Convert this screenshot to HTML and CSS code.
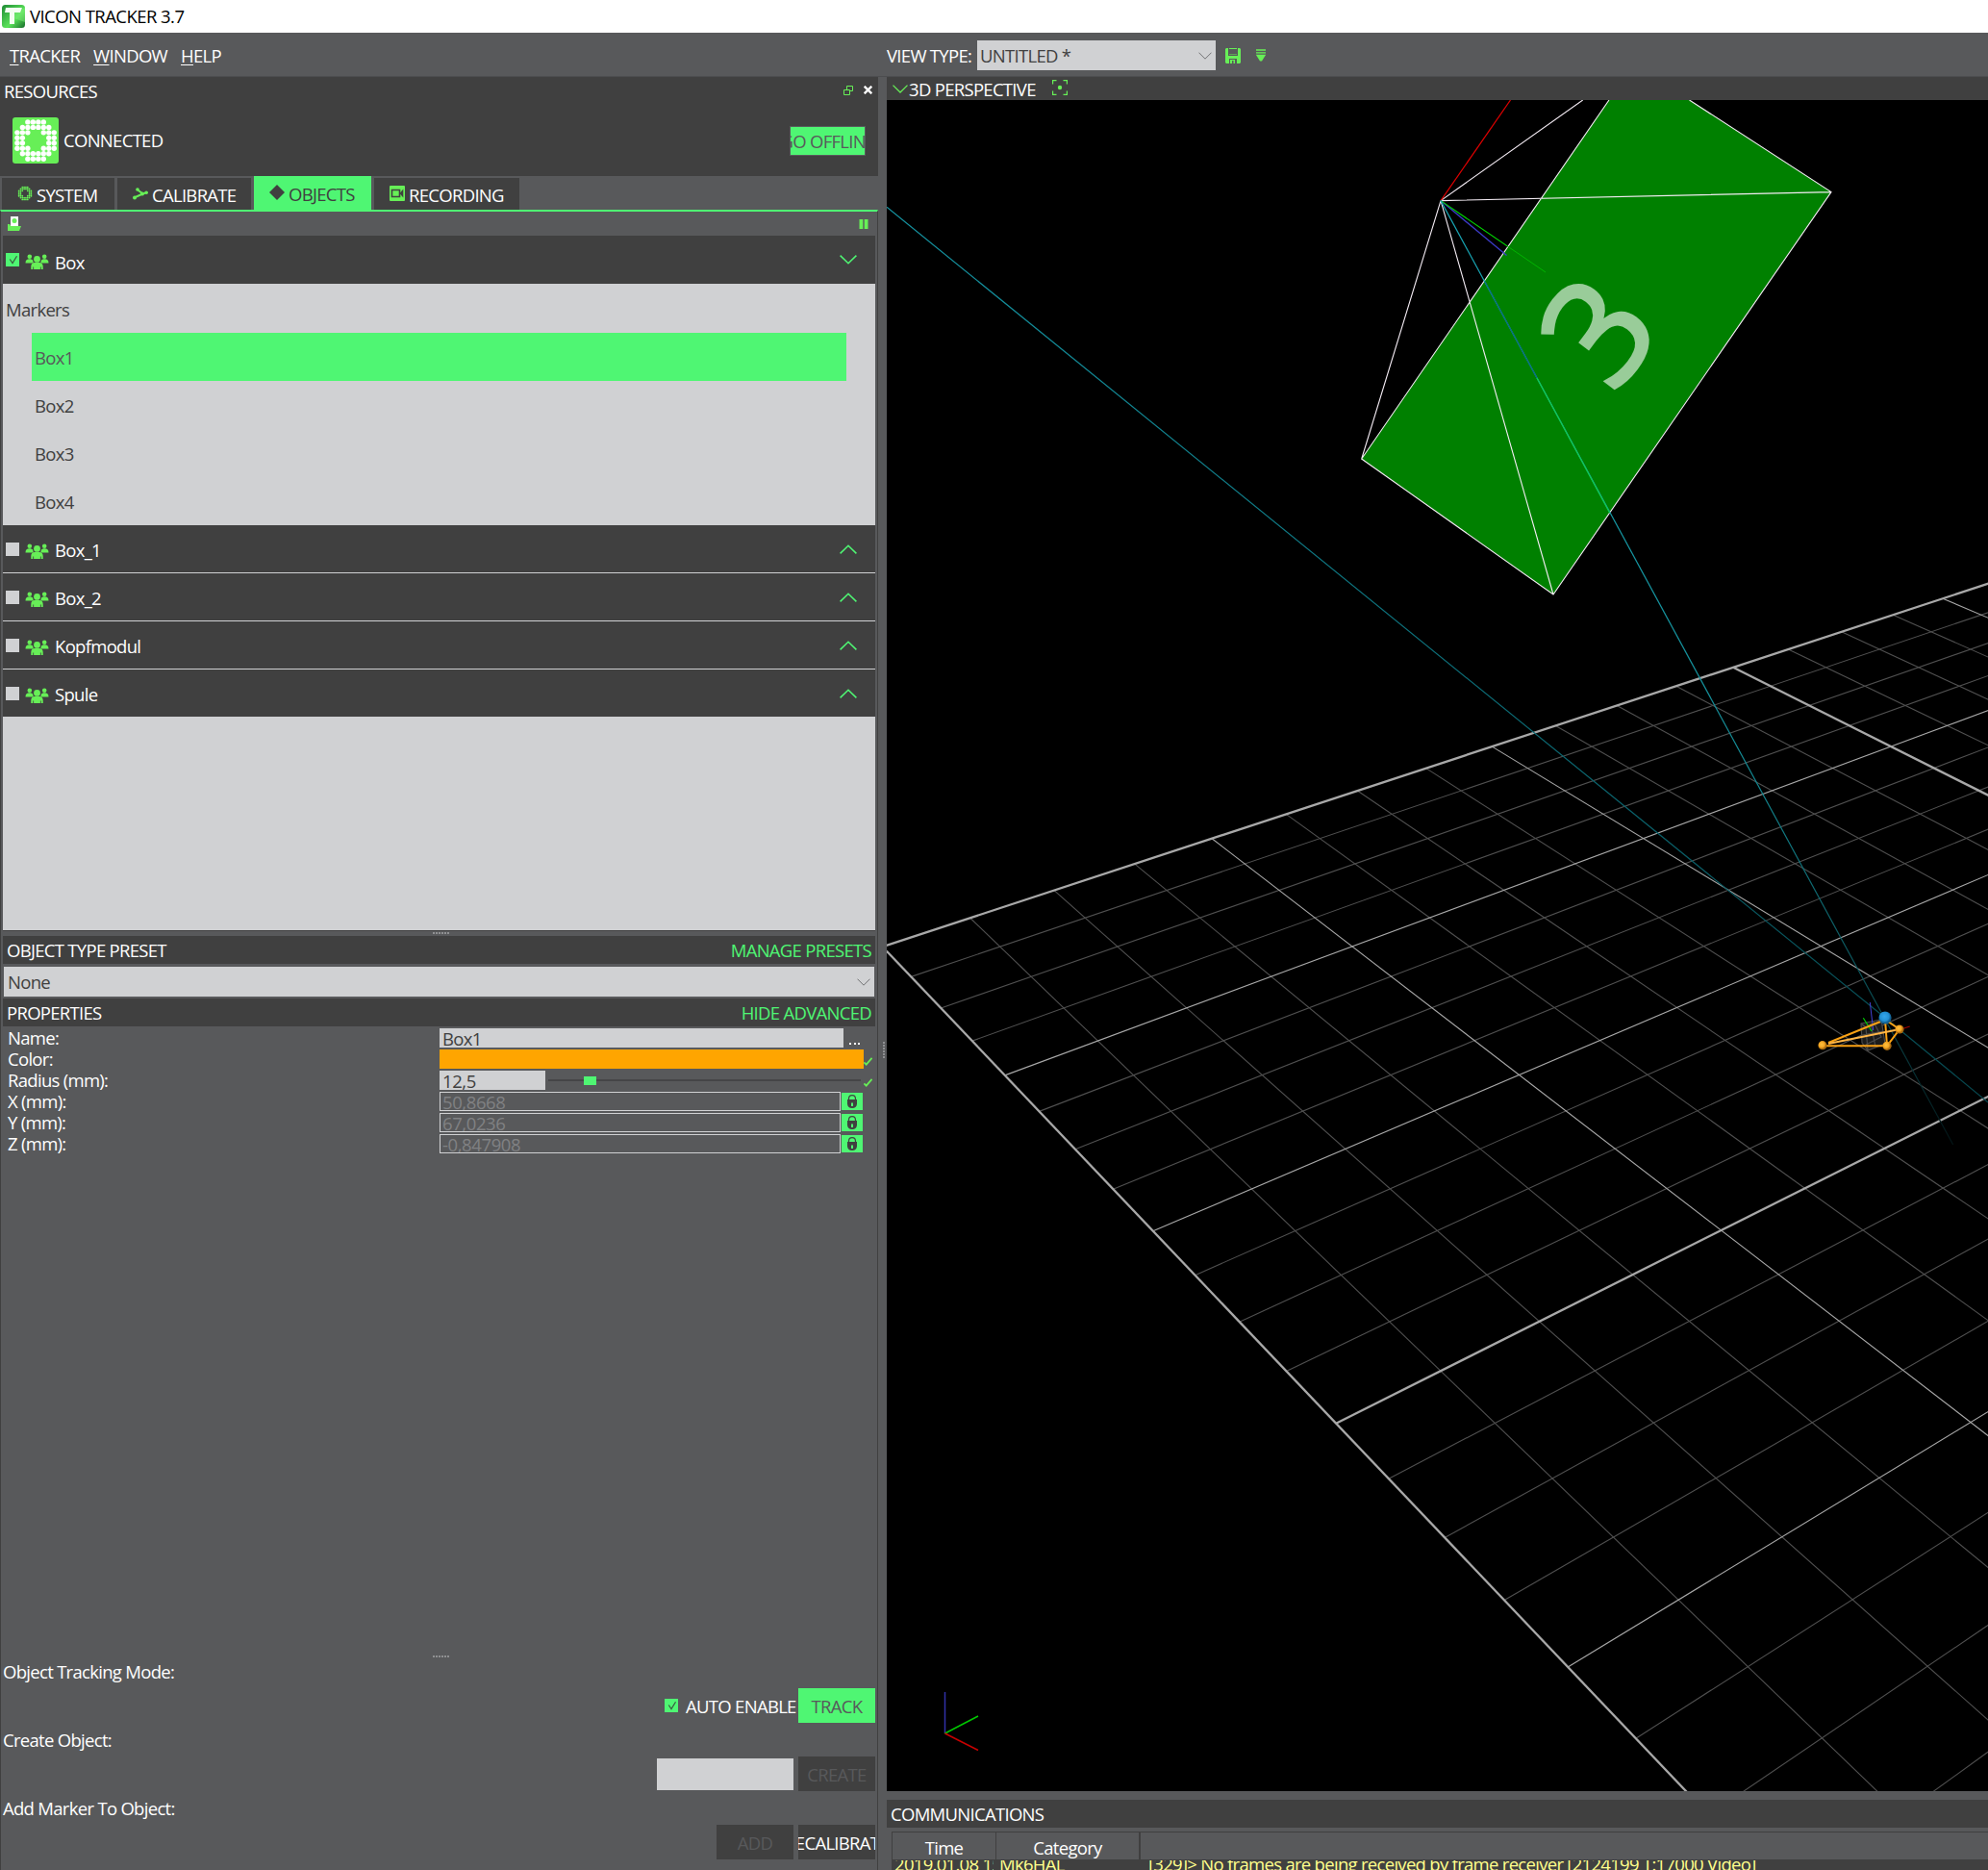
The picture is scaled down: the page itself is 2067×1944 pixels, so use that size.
FILE: index.html
```html
<!DOCTYPE html>
<html lang="en">
<head>
<meta charset="utf-8">
<title>VICON TRACKER 3.7</title>
<link rel="stylesheet" href="styles.css">
</head>
<body>
<svg class="defs" width="0" height="0">
  <defs>
    <symbol id="people" viewBox="0 0 24 16">
      <circle cx="4.3" cy="2.7" r="2.3"/><circle cx="19.7" cy="2.7" r="2.3"/>
      <path d="M0 9.4c0-3 1.4-4.2 4.2-4.2 1.7 0 2.8.5 3.4 1.5L8.300 9.400z"/>
      <path d="M24 9.400c0-3-1.400-4.200-4.200-4.200-1.700 0-2.800.5-3.400 1.500L15.700 9.400z"/>
      <circle cx="12" cy="5.400" r="3.400"/>
      <path d="M5.800 16v-3c0-2.600 1.600-4 3.800-4h4.800c2.200 0 3.800 1.400 3.800 4v3h-2v-2.600h-.8V16H8.600v-2.600h-.8V16z"/>
    </symbol>
    <symbol id="up" viewBox="0 0 18 10"><path d="M.6 9.400 9 1.200l8.400 8.200" fill="none" stroke="#4ff673" stroke-width="1.500"/></symbol>
    <symbol id="down" viewBox="0 0 18 10"><path d="M.6.6 9 8.800 17.400.6" fill="none" stroke="#4ff673" stroke-width="1.500"/></symbol>
    <symbol id="caret" viewBox="0 0 14 8"><path d="M.5.7 7 7.200 13.500.7" fill="none" stroke="#707173" stroke-width="1"/></symbol>
    <symbol id="tick" viewBox="0 0 9 9"><path d="M.4 5.300 2.700 7.600 8.600.9" fill="none" stroke="#67ef57" stroke-width="1.800"/></symbol>
    <symbol id="check" viewBox="0 0 14 14"><path d="M4.300 6.500 7 10.600 11.500 3.300" fill="none" stroke="#3a5a40" stroke-width="1.200"/></symbol>
    <symbol id="lock" viewBox="0 0 10 14">
      <path d="M1.500 5.500V4.500C1.500 2.200 3 .7 5 .7S8.500 2.200 8.500 4.500V5.500" fill="none" stroke="#404040" stroke-width="1.200"/>
      <path d="M0 5h10V9.500c0 2.700-1.800 4.500-5 4.500s-5-1.800-5-4.500z" fill="#404040"/>
      <path d="M4 8.500h2V12H4z" fill="#4ff673"/>
    </symbol>
  </defs>
</svg>

<header class="titlebar">
  <svg class="app-icon" viewBox="0 0 24 24">
    <defs><linearGradient id="ag" x1="0" y1="0" x2="1" y2="1"><stop offset="0" stop-color="#1f8a35"/><stop offset=".6" stop-color="#5be25a"/><stop offset="1" stop-color="#176b2b"/></linearGradient></defs>
    <rect width="24" height="24" rx="3.500" fill="url(#ag)"/>
    <path d="M12 8 24 3v15L12 14z" fill="#7df07a" opacity=".5"/>
    <path d="M4 3h17l-2 5h-6v12H8V8H3z" fill="#f4fff2"/>
  </svg>
  <span>VICON TRACKER 3.7</span>
</header>

<div class="toolbar">
  <nav class="menu"><span><u>T</u>RACKER</span><span><u>W</u>INDOW</span><span><u>H</u>ELP</span></nav>
  <div class="view-type">
    <span class="vt-label">VIEW TYPE:</span>
    <div class="combo vt-combo"><span>UNTITLED *</span><svg width="14" height="8"><use href="#caret"/></svg></div>
    <svg class="save" width="16" height="16" viewBox="0 0 16 16"><path fill="#67ef57" fill-rule="evenodd" d="M1 0h2v8h10V0h2l1 1v14l-1 1h-3v-5H4v5H1l-1-1V1zM4 0h8v7H4zm1 12h5v4H5zm2 1v3h1.500v-3z"/><path d="M4 1h8v5.500H4z" fill="#58595b"/></svg>
    <svg class="more" width="12" height="13" viewBox="0 0 12 13"><path d="M1 1h10M1 3.800h10" stroke="#67ef57" stroke-width="1.300"/><path d="M.8 5.700h10.400L7 12.500H5z" fill="#67ef57"/></svg>
  </div>
</div>

<main class="workspace">
  <section class="resources">
    <div class="res-head">
      <div class="res-title">
        <span>RESOURCES</span>
        <svg class="float" width="10" height="10" viewBox="0 0 10 10"><path d="M3.500 4.500v-4h6v5h-3M.5 4.500h6v5h-6z" fill="none" stroke="#67ef57"/></svg>
        <svg class="close" width="9" height="9" viewBox="0 0 9 9"><path d="M.7.700l7.600 7.600M8.300.700.700 8.300" stroke="#fff" stroke-width="2.300"/></svg>
      </div>
      <div class="status">
        <svg class="vlogo" width="48" height="48" viewBox="0 0 48 48">
          <rect width="48" height="48" rx="3" fill="#67ef57"/>
          <g class="dots" id="vdots"></g>
        </svg>
        <span>CONNECTED</span>
        <div class="offline"><span>GO OFFLINE</span></div>
      </div>
    </div>

    <div class="tabs">
      <div class="tab tab-system"><svg width="16" height="16" viewBox="0 0 48 48" fill="#67ef57"><g id="vdots2"></g></svg><span>SYSTEM</span></div>
      <div class="tab tab-calibrate"><svg width="16" height="16" viewBox="0 0 16 16"><path d="M4 3.500 10.500 8.500 1.500 12.500M10.500 8.500 14.500 7" stroke="#67ef57" stroke-width="2" fill="none"/><g fill="#67ef57"><circle cx="5" cy="4" r="1.800"/><circle cx="10" cy="8.500" r="1.900"/><circle cx="2" cy="12.500" r="2"/><circle cx="14.200" cy="7.300" r="1.800"/></g></svg><span>CALIBRATE</span></div>
      <div class="tab tab-objects active"><svg width="16" height="16" viewBox="0 0 16 16"><path d="M8 0l8 8-8 8-8-8z" fill="#404040"/></svg><span>OBJECTS</span></div>
      <div class="tab tab-recording"><svg width="16" height="16" viewBox="0 0 16 16"><rect width="16" height="16" rx="1" fill="#67ef57"/><path d="M2.500 4.500h8v7h-8z" fill="#67ef57" stroke="#404040" stroke-width="1.600"/><path d="M10.500 8 14.300 3.500v9z" fill="#404040"/></svg><span>RECORDING</span></div>
    </div>

    <div class="objects">
      <div class="obj-tools">
        <svg width="15" height="15" viewBox="0 0 15 15"><path d="M3 0h8v11H3z" fill="#fff"/><circle cx="7" cy="4.500" r="2.500" fill="#67ef57"/><path d="M0 8h2l1 2h11l-2 5H0z" fill="#67ef57"/></svg>
        <svg width="10" height="10" viewBox="0 0 10 10"><path d="M.5 0h3.800v10H.5zM5.700 0h3.800v10H5.700z" fill="#67ef57"/></svg>
      </div>
      <div class="list">
        <div class="group"><i class="cb on"><svg><use href="#check"/></svg></i><svg class="ppl"><use href="#people"/></svg><span>Box</span><svg class="chev"><use href="#down"/></svg></div>
        <div class="markers">
          <div class="mk-title">Markers</div>
          <div class="mk selected">Box1</div>
          <div class="mk">Box2</div>
          <div class="mk">Box3</div>
          <div class="mk">Box4</div>
        </div>
        <div class="group lined"><i class="cb"></i><svg class="ppl"><use href="#people"/></svg><span>Box_1</span><svg class="chev"><use href="#up"/></svg></div>
        <div class="group lined"><i class="cb"></i><svg class="ppl"><use href="#people"/></svg><span>Box_2</span><svg class="chev"><use href="#up"/></svg></div>
        <div class="group lined"><i class="cb"></i><svg class="ppl"><use href="#people"/></svg><span>Kopfmodul</span><svg class="chev"><use href="#up"/></svg></div>
        <div class="group"><i class="cb"></i><svg class="ppl"><use href="#people"/></svg><span>Spule</span><svg class="chev"><use href="#up"/></svg></div>
      </div>
      <div class="grip g1"></div>
      <div class="bar"><span>OBJECT TYPE PRESET</span><a>MANAGE PRESETS</a></div>
      <div class="combo preset"><span>None</span><svg width="14" height="8"><use href="#caret"/></svg></div>
      <div class="bar"><span>PROPERTIES</span><a>HIDE ADVANCED</a></div>
      <div class="props">
        <div class="prop"><label>Name:</label><div class="field name">Box1</div><i class="ellipsis"></i></div>
        <div class="prop"><label>Color:</label><div class="field color"></div><svg class="tick"><use href="#tick"/></svg></div>
        <div class="prop"><label>Radius (mm):</label><div class="field radius">12,5</div><div class="slider"><b></b></div><svg class="tick"><use href="#tick"/></svg></div>
        <div class="prop"><label>X (mm):</label><div class="field locked">50,8668</div><div class="lock"><svg><use href="#lock"/></svg></div></div>
        <div class="prop"><label>Y (mm):</label><div class="field locked">67,0236</div><div class="lock"><svg><use href="#lock"/></svg></div></div>
        <div class="prop"><label>Z (mm):</label><div class="field locked">-0,847908</div><div class="lock"><svg><use href="#lock"/></svg></div></div>
      </div>
      <div class="grip g2"></div>
      <div class="actions">
        <div class="caption">Object Tracking Mode:</div>
        <div class="act"><i class="cb on"><svg><use href="#check"/></svg></i><span class="auto">AUTO ENABLE</span><div class="btn go"><span>TRACK</span></div></div>
        <div class="caption">Create Object:</div>
        <div class="act"><div class="input"></div><div class="btn off"><span>CREATE</span></div></div>
        <div class="caption">Add Marker To Object:</div>
        <div class="act"><div class="btn off add"><span>ADD</span></div><div class="btn"><span>RECALIBRATE</span></div></div>
      </div>
    </div>
  </section>

  <div class="splitter"><div class="vgrip"></div></div>

  <section class="view">
    <div class="view-head">
      <svg width="16" height="9" viewBox="0 0 16 9"><path d="M.5.600 8 8 15.500.600" fill="none" stroke="#67ef57" stroke-width="1.300"/></svg>
      <span>3D PERSPECTIVE</span>
      <svg class="focus" width="16" height="16" viewBox="0 0 16 16"><path d="M.6 4.500V.600H4.500M11.500.600h3.900V4.500M15.400 11.500v3.900H11.500M4.500 15.400H.600V11.500" fill="none" stroke="#67ef57" stroke-width="1.200"/><circle cx="8" cy="8" r="2.200" fill="#67ef57"/></svg>
    </div>
    <svg class="scene" width="1145" height="1758" viewBox="922 104 1145 1758">
      <defs>
        <linearGradient id="rayA" gradientUnits="userSpaceOnUse" x1="922" y1="215" x2="2067" y2="1146"><stop offset="0" stop-color="#1593a1"/><stop offset=".6" stop-color="#0b6670"/><stop offset="1" stop-color="#06454c"/></linearGradient>
        <linearGradient id="rayB" gradientUnits="userSpaceOnUse" x1="1498" y1="209" x2="2031" y2="1190"><stop offset="0" stop-color="#18a6b5"/><stop offset=".6" stop-color="#148a94"/><stop offset=".85" stop-color="#0a4a50"/><stop offset="1" stop-color="#031416"/></linearGradient>
        <radialGradient id="ob" cx=".4" cy=".4"><stop offset="0" stop-color="#ffc140"/><stop offset=".65" stop-color="#f5a623"/><stop offset="1" stop-color="#a86a10"/></radialGradient>
        <radialGradient id="bb" cx=".45" cy=".4"><stop offset="0" stop-color="#35a6ea"/><stop offset=".7" stop-color="#2291d4"/><stop offset="1" stop-color="#125f90"/></radialGradient>
      </defs>
      <g id="grid"></g>
      <path d="M1673 104 1415.700 477 1615 618 1904 199.600 1756.500 104z" fill="#008000"/>
      <path d="M1673 104 1415.700 477 1615 618 1904 199.600 1756.500 104M1498 208.600 1415.700 477M1498 208.600 1615 618M1498 208.600 1904 199.600M1498 208.600 1645.700 104" fill="none" stroke="#f4ecf4" stroke-width="1.100"/>
      <path d="M1498 208.600 1570.500 104" stroke="#e00000" stroke-width="1.200"/>
      <path d="M1498 208.600 1566.500 265.500" stroke="#3c3cc8" stroke-width="1.300"/>
      <path d="M1498 208.600 1567 255.700" stroke="#00d800" stroke-width="1.100"/>
      <path d="M1567 255.700 1607 283" stroke="#00b400" stroke-width="1"/>
      <path d="M1498 208.600 2030.700 1190" stroke="url(#rayB)" stroke-width="1.200"/>
      <path d="M1544 293 1598 393" stroke="#0a6a80" stroke-width="1.200"/>
      <path d="M1598 393 1673.600 533" stroke="#10cc50" stroke-width="1.200"/>
      <path d="M922 215.300 1960 1058 2067 1146" fill="none" stroke="url(#rayA)" stroke-width="1.200"/>
      <text class="cam-no" transform="translate(1660 343.500) rotate(-53)" x="0" y="55.500" text-anchor="middle">3</text>
      <g fill="none" stroke="#4a4a4a" stroke-width="1.200">
        <path d="M1935 1064 1956 1060 1960 1085 1942 1092 1936 1084z" fill="#1c1c1c"/>
        <path d="M1935 1064 1940 1068 1958 1062M1940 1068 1942 1092M1948 1062 1956 1078 1940 1086M1936 1076 1958 1072M1950 1088 1945 1064" />
      </g>
      <path d="M1944.300 1042 1947.700 1071" stroke="#4444d8"/>
      <path d="M1937.300 1058.300 1946 1072" stroke="#00d000" stroke-width="1.200"/>
      <path d="M1978 1069.500 1985.700 1067" stroke="#a00000" stroke-width="1.200"/>
      <path d="M1901 1084 1960 1060 1962 1087.300H1895M1960 1060 1975 1070 1962 1087.300" fill="none" stroke="#f9a114" stroke-width="2"/>
      <path d="M1901 1085 1975 1070" stroke="#ffb547" stroke-width="2"/>
      <circle cx="1895" cy="1086.700" r="4.600" fill="url(#ob)"/><circle cx="1962" cy="1087.300" r="4.600" fill="url(#ob)"/><circle cx="1975" cy="1070" r="4.600" fill="url(#ob)"/>
      <circle cx="1960" cy="1058" r="6.600" fill="url(#bb)"/>
      <g fill="none" stroke-width="1.500"><path d="M982.500 1802V1759" stroke="#3030a8"/><path d="M982.500 1802 1017 1784" stroke="#00c800"/><path d="M982.500 1802 1017 1819.500" stroke="#c80000"/></g>
    </svg>
    <div class="comm-head">COMMUNICATIONS</div>
    <div class="log">
      <div class="log-head"><span>Time</span><span>Category</span><span></span></div>
      <div class="log-row"><span>2019.01.08 15:25</span><span>Mk6HAL</span><span>[329]&gt; No frames are being received by frame receiver [2124199 T:17000 Video]</span></div>
    </div>
  </section>
</main>
<script src="scene.js"></script>
</body>
</html>
```
FILE: styles.css
```css
* { box-sizing: border-box; }
html, body { margin: 0; height: 100%; }
body {
  width: 2067px; height: 1944px; overflow: hidden;
  display: flex; flex-direction: column;
  background: #58595b; color: #fff;
  font: 18.5px/24px "Open Sans", "Noto Sans", sans-serif;
  letter-spacing: -.7px;
  white-space: nowrap;
}
svg { display: block; flex: none; }
.defs { position: absolute; }
.titlebar { height: 34px; background: #fff; color: #000; display: flex; align-items: center; padding-left: 2px; gap: 5px; letter-spacing: -.55px; }
.app-icon { width: 24px; height: 24px; }
.toolbar { height: 46px; display: flex; border-bottom: 1px solid #4c4d4f; padding-top: 2px; }
.menu { width: 922px; display: flex; align-items: center; gap: 14px; padding-left: 10px; }
.menu u { text-decoration-thickness: 1px; text-underline-offset: 2px; }
.view-type { display: flex; align-items: center; }
.vt-label { width: 94px; }
.combo { background: #d0d1d3; color: #404040; display: flex; align-items: center; justify-content: space-between; padding: 0 4px; }
.vt-combo { width: 248px; height: 31px; margin-top: -1px; padding: 1px 4px 0 3px; }
.save { margin: 0 0 0 10px; }
.more { margin-left: 15px; }

.workspace { flex: 1; display: flex; min-height: 0; }
.resources { width: 913px; display: flex; flex-direction: column; }
.res-head { height: 103px; background: #404040; }
.res-title { height: 30px; display: flex; align-items: center; padding: 0 6px 0 4px; }
.res-title span { flex: 1; }
.float { margin: 0 11px 3px 0; }
.close { margin-bottom: 3px; }
.status { height: 48px; margin-top: 12px; display: flex; align-items: center; padding: 0 13px; }
.status > span { flex: 1; padding-left: 5px; }
.dots { fill: #fff; }
.offline { width: 79px; height: 31px; border: 1px solid #58595b; background: #4ff673; color: #58595b; display: flex; justify-content: center; align-items: center; overflow: hidden; padding-top: 1px; }
.tabs { height: 35px; display: flex; align-items: flex-end; gap: 3px; padding-left: 2px; }
.tab { height: 33px; background: #404040; display: flex; align-items: center; padding-top: 2px; gap: 4px; }
.tab svg { margin-top: -3px; }
.tab.active { height: 35px; background: #4ff673; color: #404040; padding-top: 2px; }
.tab-system { width: 117px; padding-left: 16px; }
.tab-calibrate { width: 139px; padding-left: 16px; }
.tab-objects { width: 122px; padding-left: 16px; }
.tab-recording { width: 151px; padding-left: 16px; gap: 4px; }

.objects { flex: 1; min-height: 0; display: flex; flex-direction: column; border-top: 2px solid #4ff673; border-left: 1px solid #404040; border-right: 1px solid #404040; padding: 0 2px; }
.obj-tools { height: 25px; display: flex; justify-content: space-between; align-items: center; padding: 0 7px 0 5px; }
.list { height: 723px; background: #d0d1d3; border-bottom: 1px solid #404040; }
.group { height: 49px; background: #404040; display: flex; align-items: center; padding: 0 17px 0 3px; }
.group:first-child { height: 50px; }
.lined { height: 50px; border-bottom: 1px solid #d0d1d3; }
.group span { flex: 1; padding: 3px 0 0 6px; }
.group:first-child span { padding-top: 5px; }
.cb { width: 14px; height: 14px; background: #d0d1d3; }
.cb.on { background: #4ff673; }
.cb svg { width: 14px; height: 14px; }
.ppl { width: 25px; height: 16px; margin-left: 6px; margin-top: 4px; fill: #67ef57; }
.chev { width: 18px; height: 10px; margin-right: 2px; }
.markers { height: 251px; padding-top: 1px; color: #404040; }
.mk-title { height: 50px; line-height: 52px; padding-left: 3px; }
.mk { height: 50px; line-height: 52px; margin: 0 30px; padding-left: 3px; }
.mk.selected { background: #4ff673; color: #58595b; }
.grip { width: 18px; height: 2px; background: repeating-linear-gradient(90deg, #8f9092 0 2px, transparent 2px 3px); align-self: center; }
.g1 { margin: 1px 0 2px 4px; }
.g2 { margin-left: 4px; }
.bar { height: 29px; background: #404040; display: flex; justify-content: space-between; align-items: center; padding: 1px 4px 0; }
.bar a { color: #4ff673; }
.preset { height: 31px; margin: 3px 1px 2px; }
.props { padding-top: 1px; height: 654px; }
.prop { height: 22px; display: flex; align-items: center; }
.prop label { width: 454px; padding-left: 5px; line-height: 22px; }
.field { height: 20px; line-height: 22px; overflow: hidden; background: #d0d1d3; color: #404040; padding-left: 3px; letter-spacing: -.4px; }
.name { width: 420px; letter-spacing: -.7px; }
.color { width: 441px; background: #ffa500; }
.radius { width: 110px; }
.locked { width: 417px; background: none; border: 1px solid #d0d1d3; color: #808183; padding-left: 2px; line-height: 20px; }
.tick { width: 9px; height: 9px; margin-top: 5px; }
.ellipsis { width: 11px; height: 2px; margin: 12px 0 0 6px; background: repeating-linear-gradient(90deg, #fff 0 2px, transparent 2px 4.500px); }
.slider { width: 325px; height: 2px; margin: 0 3px; background: #454547; display: flex; align-items: center; padding-left: 37px; }
.slider b { width: 13px; height: 9px; background: #4ff673; }
.lock { width: 22px; height: 18px; margin-left: 1px; background: #4ff673; display: flex; align-items: center; justify-content: center; }
.lock svg { width: 10px; height: 14px; }
.actions { padding-top: 4px; }
.caption { height: 24px; line-height: 22px; }
.act { height: 36px; margin: 4px 0 7px; display: flex; justify-content: flex-end; align-items: center; }
.act .cb { margin-top: 0; }
.auto { width: 112px; margin: 2px 0 0 8px; }
.input { width: 142px; height: 33px; background: #d0d1d3; }
.btn { width: 80px; height: 36px; margin-left: 5px; background: #404040; display: flex; align-items: center; justify-content: center; overflow: hidden; padding-top: 2px; }
.btn.go { background: #4ff673; color: #58595b; }
.btn.off { color: #58595b; }

.splitter { width: 9px; display: flex; align-items: flex-start; justify-content: flex-end; padding-right: 2px; }
.vgrip { width: 2px; height: 18px; margin-top: 1003px; background: repeating-linear-gradient(#8f9092 0 2px, transparent 2px 3px); }

.view { flex: 1; min-width: 0; display: flex; flex-direction: column; }
.view-head { height: 24px; flex: none; background: #404040; display: flex; align-items: center; padding-left: 6px; }
.view-head span { width: 150px; padding: 2px 0 0 1px; }
.focus { margin-top: -3px; }
.scene { background: #000; }
.cam-no { font: 152px "Open Sans", sans-serif; letter-spacing: 0; fill: #fff; stroke: #fff; stroke-width: 3px; opacity: .6; }
.comm-head { height: 29px; flex: none; margin-top: 9px; background: #404040; padding-left: 4px; line-height: 29px; }
.log { margin: 4px 0 0 5px; flex: 1; min-height: 0; border: solid #404040; border-width: 1px 0 0 1px; display: flex; flex-direction: column; }
.log-head { height: 29px; flex: none; border-bottom: 1px solid #404040; display: flex; }
.log-head span { border-right: 1px solid #404040; text-align: center; line-height: 31px; }
.log span:nth-child(1) { width: 108px; }
.log span:nth-child(2) { width: 149px; }
.log-row { flex: 1; min-height: 0; overflow: hidden; background: #404040; color: #ffff8c; display: flex; line-height: 7px; }
.log-row span { overflow: hidden; padding-left: 3px; }
.log-row span:nth-child(1) { padding-left: 2px; width: 105px; margin-right: 3px; }
.log-row span:nth-child(3) { padding-left: 9px; }
```
FILE: scene.js
```js
const NS = 'http://www.w3.org/2000/svg';

// Ring of dots used by the connection badge and the System tab icon
const rows = ['00111100', '01111110', '11100111', '11000011', '11000011', '11100111', '01111110', '00111100'];
function dots(id, r) {
  const g = document.getElementById(id);
  rows.forEach((row, j) => [...row].forEach((c, i) => {
    if (c === '0') return;
    const d = document.createElementNS(NS, 'circle');
    d.setAttribute('cx', 4.9 + i * 5.48);
    d.setAttribute('cy', 4.9 + j * 5.48);
    d.setAttribute('r', r);
    g.appendChild(d);
  }));
}
dots('vdots', 2.7);
dots('vdots2', 2.7);

// Floor plane: [u, v, x, y] anchors that define the camera projection
const anchors = [
  [0, 0, 917.6, 984.2],
  [12, 0, 1802.0, 693.8],
  [0, 16, 1630.2, 1733.0],
  [4, 16, 2049.0, 1478.6]
];
function solve(m) {
  const n = m.length;
  for (let c = 0; c < n; c++) {
    let p = c;
    for (let r = c; r < n; r++) if (Math.abs(m[r][c]) > Math.abs(m[p][c])) p = r;
    [m[c], m[p]] = [m[p], m[c]];
    for (let r = 0; r < n; r++) {
      if (r === c) continue;
      const f = m[r][c] / m[c][c];
      for (let k = c; k <= n; k++) m[r][k] -= f * m[c][k];
    }
  }
  return m.map((row, i) => row[n] / row[i]);
}
const eq = [];
for (const [u, v, x, y] of anchors) {
  eq.push([u, v, 1, 0, 0, 0, -u * x, -v * x, x]);
  eq.push([0, 0, 0, u, v, 1, -u * y, -v * y, y]);
}
const h = solve(eq);
const project = (u, v) => {
  const w = h[6] * u + h[7] * v + 1;
  return [(h[0] * u + h[1] * v + h[2]) / w, (h[3] * u + h[4] * v + h[5]) / w];
};

const grid = document.getElementById('grid');
function line(a, b, n) {
  const l = document.createElementNS(NS, 'path');
  l.setAttribute('d', `M${project(...a)}L${project(...b)}`);
  l.setAttribute('stroke', n % 4 ? '#505050' : '#a8a8a8');
  l.setAttribute('stroke-width', n % 12 === 0 ? 2.3 : 1.1);
  grid.appendChild(l);
}
const order = [...Array(24).keys()].sort((a, b) => (a % 4 === 0) - (b % 4 === 0));
for (const n of order) {
  line([n, 0], [n, 20], n);
  line([0, n], [20, n], n);
}
```
